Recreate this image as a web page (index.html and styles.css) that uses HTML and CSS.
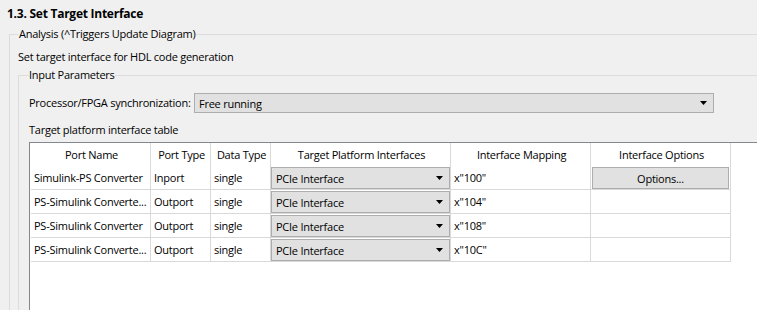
FILE: index.html
```html
<!DOCTYPE html>
<html lang="en">
<head>
    <meta charset="UTF-8">
    <meta name="viewport" content="width=device-width, initial-scale=1.0">
    <title>Set Target Interface</title>
    <link rel="stylesheet" href="styles.css">
</head>
<body>
    <div class="task-page">
        <h1 class="task-title">1.3. Set Target Interface</h1>

        <fieldset class="group group-outer">
            <legend>Analysis (^Triggers Update Diagram)</legend>
            <p class="desc">Set target interface for HDL code generation</p>

            <fieldset class="group group-inner">
                <legend>Input Parameters</legend>

                <div class="field-row">
                    <label for="sync">Processor/FPGA synchronization:</label>
                    <div class="combo combo-wide" id="sync">
                        <span>Free running</span>
                        <svg class="arrow" width="7" height="4" viewBox="0 0 7 4"><polygon points="0,0 7,0 3.5,4" fill="#000"/></svg>
                    </div>
                </div>

                <p class="table-caption">Target platform interface table</p>

                <div class="table-box">
                    <table class="iface-table">
                        <thead>
                            <tr>
                                <th class="c-name">Port Name</th>
                                <th class="c-type">Port Type</th>
                                <th class="c-data">Data Type</th>
                                <th class="c-target">Target Platform Interfaces</th>
                                <th class="c-map">Interface Mapping</th>
                                <th class="c-opt">Interface Options</th>
                            </tr>
                        </thead>
                        <tbody>
                            <tr>
                                <td>Simulink-PS Converter</td>
                                <td>Inport</td>
                                <td>single</td>
                                <td class="cell-combo"><div class="combo"><span>PCIe Interface</span><svg class="arrow" width="7" height="4" viewBox="0 0 7 4"><polygon points="0,0 7,0 3.5,4" fill="#000"/></svg></div></td>
                                <td>x"100"</td>
                                <td class="cell-combo"><button type="button" class="btn-options">Options...</button></td>
                            </tr>
                            <tr>
                                <td>PS-Simulink Converte...</td>
                                <td>Outport</td>
                                <td>single</td>
                                <td class="cell-combo"><div class="combo"><span>PCIe Interface</span><svg class="arrow" width="7" height="4" viewBox="0 0 7 4"><polygon points="0,0 7,0 3.5,4" fill="#000"/></svg></div></td>
                                <td>x"104"</td>
                                <td></td>
                            </tr>
                            <tr>
                                <td>PS-Simulink Converter</td>
                                <td>Outport</td>
                                <td>single</td>
                                <td class="cell-combo"><div class="combo"><span>PCIe Interface</span><svg class="arrow" width="7" height="4" viewBox="0 0 7 4"><polygon points="0,0 7,0 3.5,4" fill="#000"/></svg></div></td>
                                <td>x"108"</td>
                                <td></td>
                            </tr>
                            <tr>
                                <td>PS-Simulink Converte...</td>
                                <td>Outport</td>
                                <td>single</td>
                                <td class="cell-combo"><div class="combo"><span>PCIe Interface</span><svg class="arrow" width="7" height="4" viewBox="0 0 7 4"><polygon points="0,0 7,0 3.5,4" fill="#000"/></svg></div></td>
                                <td>x"10C"</td>
                                <td></td>
                            </tr>
                        </tbody>
                    </table>
                </div>
            </fieldset>
        </fieldset>
    </div>
</body>
</html>
```

FILE: styles.css
```css
/* Geral */
body {
    margin: 0;
    padding: 0;
    background: #f0f0f0;
    font-family: "Open Sans", sans-serif;
    font-size: 11px;
    letter-spacing: -0.25px;
    color: #000;
    overflow: hidden;
    height: 310px;
}

.task-page {
    width: 757px;
}

.task-title {
    margin: 0 0 4px 0;
    padding: 6px 0 0 7px;
    font-size: 12px;
    line-height: 16px;
    font-weight: bold;
}

/* Grupos (fieldset) */
.group {
    border: 1px solid #dcdcdc;
    margin: 0;
    min-width: 0;
}

.group legend {
    padding: 0 1px;
    line-height: 16px;
}

.group-outer {
    margin-left: 9px;
    margin-right: -40px;
    padding: 7px 0 200px 8px;
}

.group-inner {
    padding: 10px 0 200px 10px;
}

.group-inner > legend {
    padding: 0;
}

.desc {
    margin: 0 0 2px 0;
    line-height: 16px;
}

/* Linha do combo de sincronização */
.field-row {
    display: flex;
    align-items: center;
    gap: 6px;
}

.field-row label {
    flex: 0 0 159px;
    min-width: 0;
    line-height: 16px;
    white-space: nowrap;
}

.combo {
    display: flex;
    align-items: center;
    justify-content: space-between;
    box-sizing: border-box;
    height: 22px;
    padding: 0 6px 0 4px;
    background: #e1e1e1;
    border: 1px solid #adadad;
}

.combo-wide {
    flex: 0 0 520px;
    height: 20px;
}

.table-caption {
    margin: 9px 0 4px 0;
    line-height: 16px;
}

/* Tabela */
.table-box {
    background: #fff;
    border-top: 1px solid #828790;
    border-left: 1px solid #828790;
    height: 300px;
    padding-left: 1px;
}

.iface-table {
    border-collapse: separate;
    border-spacing: 0;
    table-layout: fixed;
    width: 700px;
}

.iface-table th,
.iface-table td {
    box-sizing: border-box;
    height: 24px;
    padding: 0 1px 0 3px;
    border-right: 1px solid #d9d9d9;
    border-bottom: 1px solid #d9d9d9;
    white-space: nowrap;
    overflow: hidden;
    text-align: left;
    font-weight: normal;
}

.iface-table th {
    height: 23px;
    text-align: center;
    border-bottom: none;
}

.iface-table .cell-combo {
    padding: 1px 0 0 0;
    vertical-align: top;
}

.c-name { width: 120px; }
.c-type { width: 60px; }
.c-data { width: 60px; }
.c-target { width: 180px; }
.c-map { width: 140px; }
.c-opt { width: 140px; }

.btn-options {
    display: block;
    box-sizing: border-box;
    width: 137px;
    height: 22px;
    margin: 0 0 0 1px;
    padding: 0;
    background: #e1e1e1;
    border: 1px solid #adadad;
    font-family: inherit;
    font-size: 11px;
    letter-spacing: inherit;
    color: #000;
}
```
